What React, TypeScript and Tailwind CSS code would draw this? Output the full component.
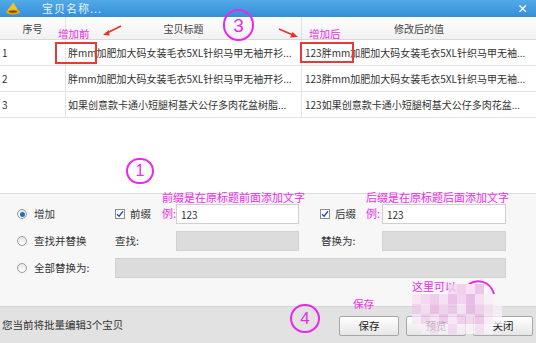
import React from "react"

const rows = [
  {
    no: "1",
    title: "胖mm加肥加大码女装毛衣5XL针织马甲无袖开衫...",
    value: "123胖mm加肥加大码女装毛衣5XL针织马甲无袖...",
  },
  {
    no: "2",
    title: "胖mm加肥加大码女装毛衣5XL针织马甲无袖开衫...",
    value: "123胖mm加肥加大码女装毛衣5XL针织马甲无袖...",
  },
  {
    no: "3",
    title: "如果创意款卡通小短腿柯基犬公仔多肉花盆树脂...",
    value: "123如果创意款卡通小短腿柯基犬公仔多肉花盆...",
  },
]

// mosaic censor cells over the bottom right corner
const mosaic = [
  ["", "", "", "", "bg-[#f3d2ee]", "bg-[#eec4ea]", "bg-[#f6dcf2]", "bg-[#e9b6e6]", "", ""],
  ["bg-[#f7e2f4]", "bg-[#f2d0ee]", "bg-[#ecc0e8]", "bg-[#f5daf1]", "bg-[#e7b0e3]", "bg-[#f0caeb]", "bg-[#e4aae0]", "bg-[#f4d6f0]", "bg-[#faeef8]", ""],
  ["bg-[#eec6ea]", "bg-[#f6dcf2]", "bg-[#e8b4e4]", "bg-[#f2d0ee]", "bg-[#ecbee8]", "bg-[#f8e4f5]", "bg-[#e6b0e2]", "bg-[#f1ccec]", "bg-[#f6e0f3]", "bg-[#fbf0f9]"],
  ["bg-[#f8e6f6]", "bg-[#efcaeb]", "bg-[#f5dcf2]", "bg-[#eabae6]", "bg-[#f7e2f4]", "bg-[#edc4e9]", "bg-[#f3d6ef]", "bg-[#e9b8e5]", "bg-[#f8e8f6]", "bg-[#fdf6fc]"],
  ["", "bg-[#faeef8]", "bg-[#f4dcf1]", "bg-[#fbf2fa]", "bg-[#f2d4ee]", "bg-[#f9ecf7]", "bg-[#fdf8fc]", "bg-[#f4dcf1]", "bg-[#fcf4fb]", ""],
]

function Radio({ checked }: { checked?: boolean }) {
  return (
    <span className="w-[10px] h-[10px] rounded-full border border-[#9a9a9a] bg-gradient-to-b from-[#e6e6e6] to-white flex items-center justify-center shrink-0">
      {checked && <span className="w-[5px] h-[5px] rounded-full bg-[#1f6fb8]" />}
    </span>
  )
}

function Check() {
  return (
    <span className="w-[10px] h-[10px] border border-[#8c8c8c] bg-white flex items-center justify-center shrink-0">
      <svg width="8" height="8" viewBox="0 0 8 8">
        <path d="M1 4.2 L3.1 6.3 L7 1.2" fill="none" stroke="#2b4fa8" strokeWidth="1.4" />
      </svg>
    </span>
  )
}

function Btn({ label }: { label: string }) {
  return (
    <button className="w-[60px] h-[20px] rounded-[2px] border border-[#a8a8a8] bg-gradient-to-b from-white to-[#e6e6e6] text-[10.5px] text-[#222] flex items-center justify-center">
      {label}
    </button>
  )
}

export default function App() {
  const mag = "text-[#ec2de8]"
  return (
    <div
      className="relative w-[536px] h-[343px] overflow-hidden bg-white flex flex-col text-[#333]"
      style={{ fontFamily: '"Noto Sans CJK SC", "Liberation Sans", sans-serif' }}
    >
      {/* title bar */}
      <div className="h-[17px] shrink-0 bg-gradient-to-b from-[#52a9e8] to-[#348fd7] flex items-center px-[5px]">
        <svg width="16" height="13" viewBox="0 0 16 13">
          <path d="M2 10 C3 6 6 5 7 2 C8 0 10 1 9.5 3 C11 4 12 6 13 9 Z" fill="#f6c21a" />
          <ellipse cx="8" cy="10" rx="7" ry="2.4" fill="#e5a90c" />
          <ellipse cx="8" cy="9.6" rx="4.2" ry="1.2" fill="#7a4a10" />
        </svg>
        <span className="ml-[21px] text-[11px] leading-none text-[#e4f2ff] tracking-[1px]">宝贝名称...</span>
        <span className="ml-auto mr-[3px] text-[11px] leading-none font-bold text-white">×</span>
      </div>

      {/* table */}
      <div className="h-[176px] shrink-0 flex flex-col text-[10px]">
        <div className="h-[23px] flex bg-gradient-to-b from-white to-[#f1f1f1] border-b border-[#d9d9d9] text-[#444]">
          <div className="w-[66px] flex items-center justify-center border-r border-[#e2e2e2]">序号</div>
          <div className="w-[236px] flex items-center justify-center border-r border-[#e2e2e2]">宝贝标题</div>
          <div className="flex-1 flex items-center justify-center">修改后的值</div>
        </div>
        {rows.map((r) => (
          <div key={r.no} className="h-[26px] flex border-b border-[#e4e4e4]">
            <div className="w-[66px] flex items-center pl-[2px] border-r border-[#e4e4e4]">{r.no}</div>
            <div className="w-[236px] flex items-center pl-[2px] border-r border-[#e4e4e4] whitespace-nowrap overflow-hidden">{r.title}</div>
            <div className="flex-1 flex items-center pl-[3px] whitespace-nowrap overflow-hidden">{r.value}</div>
          </div>
        ))}
      </div>

      {/* options */}
      <div className="h-[113px] shrink-0 bg-[#f7f7f7] border-t border-[#dcdcdc] pt-[10px] flex flex-col gap-[7px] text-[10.5px] text-[#333]">
        <div className="h-[20px] flex items-center pl-[17px]">
          <div className="w-[98px] flex items-center gap-[7px]">
            <Radio checked />
            <span>增加</span>
          </div>
          <div className="w-[61px] flex items-center gap-[5px]">
            <Check />
            <span>前缀</span>
          </div>
          <div className="w-[123px] h-[20px] bg-white border border-[#cfcfcf] flex items-center pl-[4px] text-[10px]">123</div>
          <div className="w-[83px] flex items-center gap-[5px] pl-[21px]">
            <Check />
            <span>后缀</span>
          </div>
          <div className="w-[124px] h-[20px] bg-white border border-[#cfcfcf] flex items-center pl-[4px] text-[10px]">123</div>
        </div>
        <div className="h-[20px] flex items-center pl-[17px]">
          <div className="w-[98px] flex items-center gap-[7px]">
            <Radio />
            <span>查找并替换</span>
          </div>
          <div className="w-[61px]">查找:</div>
          <div className="w-[123px] h-[20px] bg-[#dcdcdc] border border-[#d2d2d2]" />
          <div className="w-[83px] pl-[22px]">替换为:</div>
          <div className="w-[124px] h-[20px] bg-[#dcdcdc] border border-[#d2d2d2]" />
        </div>
        <div className="h-[20px] flex items-center pl-[17px]">
          <div className="w-[98px] flex items-center gap-[7px]">
            <Radio />
            <span>全部替换为:</span>
          </div>
          <div className="w-[391px] h-[20px] bg-[#dcdcdc] border border-[#d2d2d2]" />
        </div>
      </div>

      {/* footer */}
      <div className="flex-1 bg-[#e2e2e2] border-t border-[#d4d4d4] flex items-center pl-[2px] pr-[3px] text-[10.5px] text-[#333]">
        <span>您当前将批量编辑3个宝贝</span>
        <div className="ml-auto flex gap-[7px] mt-[2px]">
          <Btn label="保存" />
          <Btn label="预览" />
          <Btn label="关闭" />
        </div>
      </div>

      {/* annotations */}
      <span className={`absolute left-[58px] top-[26px] text-[10.5px] ${mag}`}>增加前</span>
      <svg className="absolute left-[100px] top-[24px]" width="24" height="14" viewBox="0 0 24 14">
        <path d="M21 2 L5 10" stroke="#e8322e" strokeWidth="1.6" />
        <path d="M3 11 L9 6 L9.5 11.5 Z" fill="#e8322e" />
      </svg>
      <div className="absolute left-[55px] top-[42px] w-[42px] h-[22px] border-2 border-[#e53a36]" />

      <div className="absolute left-[223px] top-[9px] w-[31px] h-[32px] rounded-full border-2 border-[#ea28e6] flex items-center justify-center">
        <span className={`text-[19px] leading-none ${mag}`} style={{ fontFamily: '"Liberation Sans", sans-serif' }}>3</span>
      </div>

      <svg className="absolute left-[277px] top-[26px]" width="24" height="14" viewBox="0 0 24 14">
        <path d="M2 3 L16 9" stroke="#e8322e" strokeWidth="1.6" />
        <path d="M21 11 L13 11.5 L15.5 6 Z" fill="#e8322e" />
      </svg>
      <span className={`absolute left-[309px] top-[26px] text-[10.5px] ${mag}`}>增加后</span>
      <div className="absolute left-[300px] top-[42px] w-[54px] h-[21px] border-2 border-[#e53a36]" />

      <div className="absolute left-[126px] top-[158px] w-[28px] h-[26px] rounded-full border-2 border-[#ea28e6] flex items-center justify-center">
        <span className={`text-[16px] leading-none ${mag}`} style={{ fontFamily: '"Liberation Sans", sans-serif' }}>1</span>
      </div>

      <span className={`absolute left-[162px] top-[191px] text-[11px] leading-[13px] ${mag}`}>前缀是在原标题前面添加文字</span>
      <span className={`absolute left-[162px] top-[207px] text-[11px] leading-[13px] ${mag}`}>例:</span>
      <span className={`absolute left-[366px] top-[191px] text-[11px] leading-[13px] ${mag}`}>后缀是在原标题后面添加文字</span>
      <span className={`absolute left-[366px] top-[207px] text-[11px] leading-[13px] ${mag}`}>例:</span>

      <span className={`absolute left-[353px] top-[297px] text-[10.5px] leading-[13px] ${mag}`}>保存</span>
      <div className="absolute left-[290px] top-[304px] w-[30px] h-[29px] rounded-full border-2 border-[#ea28e6] flex items-center justify-center">
        <span className={`text-[17px] leading-none ${mag}`} style={{ fontFamily: '"Liberation Sans", sans-serif' }}>4</span>
      </div>

      <span className={`absolute left-[412px] top-[280px] text-[11px] leading-[13px] ${mag}`}>这里可以</span>
      <svg className="absolute left-[466px] top-[280px]" width="32" height="22" viewBox="0 0 32 22">
        <path d="M3 4 C10 -1 24 0 28 14" fill="none" stroke="#ea28e6" strokeWidth="2" />
      </svg>
      <div className="absolute left-[412px] top-[284px] flex flex-col opacity-75">
        {mosaic.map((row, i) => (
          <div key={i} className="flex">
            {row.map((c, j) => (
              <div key={j} className={`w-[9px] h-[10px] ${c}`} />
            ))}
          </div>
        ))}
      </div>
    </div>
  )
}
